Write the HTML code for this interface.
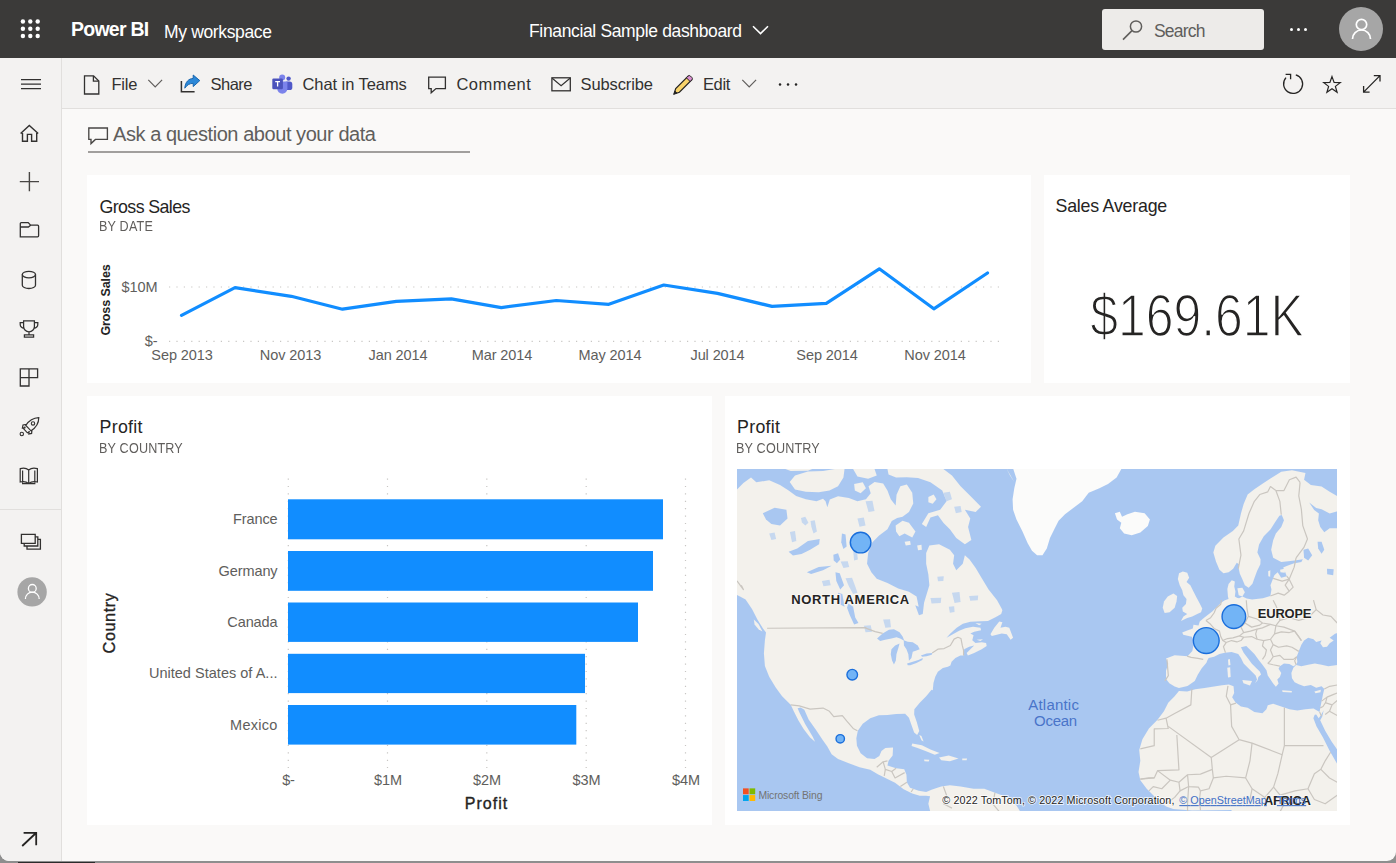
<!DOCTYPE html>
<html lang="en">
<head>
<meta charset="utf-8">
<title>Financial Sample dashboard - Power BI</title>
<style>
*{box-sizing:border-box;margin:0;padding:0}
html,body{width:1396px;height:863px;overflow:hidden;background:#8e8e8e}
body{font-family:"Liberation Sans",sans-serif;color:#252423;position:relative}
#win{position:absolute;left:0;top:0;width:1396px;height:861px;background:#faf9f8;border-radius:0 0 9px 9px;overflow:hidden}
.abs{position:absolute}
#top{left:0;top:0;width:1396px;height:58px;background:#3b3a39;color:#fff}
#tool{left:0;top:58px;width:1396px;height:51px;background:#f3f2f1;border-bottom:1px solid #e1dfdd}
#nav{left:0;top:58px;width:62px;height:805px;background:#f3f2f1;border-right:1px solid #e1dfdd}
.t{position:absolute;white-space:nowrap;line-height:1}
.card{position:absolute;background:#fff}
svg{position:absolute;overflow:visible}
.ttl{font-size:17.8px;color:#252423;letter-spacing:-0.35px}
.sub{font-size:14px;color:#605e5c;letter-spacing:0.2px;transform:scaleX(0.9);transform-origin:0 0}
.ax{font-size:14.5px;color:#605e5c;letter-spacing:-0.1px}
.xl{transform:translateX(-50%)}
.yl{right:1118.5px}
.tb{font-size:16.5px;color:#323130;top:75.5px}
</style>
</head>
<body>
<div id="win">
<div id="top" class="abs"></div>
<div id="tool" class="abs"></div>
<div id="nav" class="abs"></div>

<!-- TOP BAR -->
<svg id="waffle" style="left:20px;top:19px" width="21" height="21" viewBox="0 0 21 21" fill="#fff"><circle cx="2.9" cy="2.5" r="2.2"/><circle cx="10.3" cy="2.5" r="2.2"/><circle cx="17.7" cy="2.5" r="2.2"/><circle cx="2.9" cy="9.8" r="2.2"/><circle cx="10.3" cy="9.8" r="2.2"/><circle cx="17.7" cy="9.8" r="2.2"/><circle cx="2.9" cy="17.0" r="2.2"/><circle cx="10.3" cy="17.0" r="2.2"/><circle cx="17.7" cy="17.0" r="2.2"/></svg>
<div class="t" id="pbi" style="left:71px;top:20px;font-size:19.5px;font-weight:bold;color:#fff;letter-spacing:-0.75px">Power BI</div>
<div class="t" id="myws" style="left:164px;top:24px;font-size:17.5px;color:#fff;letter-spacing:-0.35px">My workspace</div>
<div class="t" id="dash" style="left:529px;top:22.5px;font-size:17.5px;color:#fff;letter-spacing:-0.35px">Financial Sample dashboard</div>
<svg style="left:752px;top:25px" width="17" height="10" viewBox="0 0 17 10"><path d="M1 1.2 L8.5 8.6 L16 1.2" fill="none" stroke="#fff" stroke-width="1.6"/></svg>
<div class="abs" id="search" style="left:1102px;top:9px;width:162px;height:41px;background:#edebe9;border-radius:3px"></div>
<svg style="left:1122px;top:19px" width="22" height="22" viewBox="0 0 22 22"><circle cx="14" cy="7.5" r="5.6" fill="none" stroke="#605e5c" stroke-width="1.5"/><path d="M10 11.6 L1 20.6" stroke="#605e5c" stroke-width="1.6" fill="none"/></svg>
<div class="t" id="srch" style="left:1154px;top:23px;font-size:17.5px;color:#605e5c;letter-spacing:-0.8px">Search</div>
<svg style="left:1289px;top:27px" width="19" height="5" viewBox="0 0 19 5" fill="#fff"><circle cx="2.5" cy="2.5" r="1.5"/><circle cx="9.5" cy="2.5" r="1.5"/><circle cx="16.5" cy="2.5" r="1.5"/></svg>
<svg style="left:1339px;top:7px" width="44" height="44" viewBox="0 0 44 44"><circle cx="22" cy="22" r="22" fill="#a6a6a6"/><circle cx="22.5" cy="17.5" r="5.2" fill="none" stroke="#fff" stroke-width="1.7"/><path d="M13.5 32 A9 9 0 0 1 31.5 32" fill="none" stroke="#fff" stroke-width="1.7"/></svg>


<!-- TOOLBAR ICONS -->
<svg style="left:0;top:0" width="1396" height="110" viewBox="0 0 1396 110" fill="none" stroke="#323130" stroke-width="1.3" stroke-linejoin="miter">
<!-- file -->
<path d="M84.5 75.8 H93.6 L98.8 81 V94 H84.5 Z"/><path d="M93.4 76 V81.2 H98.6"/>
<path d="M148.3 79.8 L155.2 86.8 L162.1 79.8" stroke-width="1.2" stroke="#605e5c"/>
<!-- share -->
<path d="M181.4 81 V91.8 H194.6" stroke-width="1.5"/>
<path d="M199.8 80.6 L193.2 75 V78.4 C188.6 78.6 185.2 82 184.8 88.2 C187 85 189.6 83.4 193.2 83.3 V86.6 Z" fill="#2b88d8" stroke="#0f5ea8" stroke-width="0.9"/>
<!-- teams -->
<g stroke="none">
<circle cx="288.6" cy="78.6" r="2.2" fill="#5059c9"/><rect x="284.5" y="81.6" width="7.8" height="8.4" rx="2.6" fill="#5059c9"/>
<circle cx="282.2" cy="77.6" r="3" fill="#7b83eb"/><path d="M277.2 81.6 H287.4 V88.6 A5.1 5.1 0 0 1 277.2 88.6 Z" fill="#7b83eb"/>
<rect x="272.3" y="78.6" width="10.6" height="10.6" rx="1.2" fill="#4b53bc"/>
</g>
<path d="M275.2 81.6 H280 M277.6 81.6 V86.6" stroke="#fff" stroke-width="1.3"/>
<!-- comment -->
<path d="M428.7 77.2 H445.4 V88.6 H436 L431.2 92.8 V88.6 H428.7 Z" stroke-width="1.3"/>
<!-- mail -->
<rect x="551.9" y="77.8" width="18.4" height="13" stroke-width="1.3"/><path d="M552.2 78.2 L561.1 85.6 L570 78.2" stroke-width="1.2"/>
<!-- pencil -->
<path d="M688.2 76 L691.9 79.7 L679.4 92.2 L674 94 L675.7 88.5 Z" fill="#f8d36a" stroke="#252423" stroke-width="1.2"/>
<path d="M686.4 77.8 L688.2 76 A1.6 1.6 0 0 1 690.4 76 L691.9 77.5 A1.6 1.6 0 0 1 691.9 79.7 L690.1 81.5 Z" fill="#d98fd1" stroke="#252423" stroke-width="1"/>
<path d="M674 94 L674.9 91 L677 93 Z" fill="#252423" stroke="#252423" stroke-width="0.8"/>
<path d="M742.3 79.8 L749.2 86.8 L756.1 79.8" stroke-width="1.2" stroke="#605e5c"/>
<g fill="#252423" stroke="none"><circle cx="780" cy="84.4" r="1.25"/><circle cx="788" cy="84.4" r="1.25"/><circle cx="796" cy="84.4" r="1.25"/></g>
<!-- refresh -->
<path d="M1295.8 74.8 A9.5 9.5 0 1 1 1286 77.6" stroke-width="1.3" stroke="#252423"/>
<path d="M1285.6 74.4 H1290.6 V79.2" stroke-width="1.3" stroke="#252423"/>
<!-- star -->
<path d="M1332.0 76.6 L1334.1 82.4 L1340.3 82.6 L1335.4 86.4 L1337.1 92.3 L1332.0 88.8 L1326.9 92.3 L1328.6 86.4 L1323.7 82.6 L1329.9 82.4 Z" stroke-width="1.2" stroke="#252423"/>
<!-- expand -->
<path d="M1363.6 92.1 L1380 75.6 M1373.8 75.6 H1380 V81.6 M1363.6 86 V92.1 H1369.6" stroke-width="1.3" stroke="#252423"/>
</svg>

<!-- TOOLBAR TEXT -->
<div class="t tb" style="left:111.5px;letter-spacing:-0.25px">File</div>
<div class="t tb" style="left:210.5px;letter-spacing:-0.5px">Share</div>
<div class="t tb" style="left:302.5px;letter-spacing:-0.07px">Chat in Teams</div>
<div class="t tb" style="left:456.5px;letter-spacing:0.45px">Comment</div>
<div class="t tb" style="left:580.5px;letter-spacing:-0.12px">Subscribe</div>
<div class="t tb" style="left:703px;letter-spacing:-0.4px">Edit</div>


<!-- NAV ICONS -->
<svg style="left:0;top:58px" width="62" height="805" viewBox="0 58 62 805" fill="none" stroke="#323130" stroke-width="1.3">
<path d="M21 79.7 H41 M21 84.2 H41 M21 88.7 H41" stroke-width="1.3"/>
<!-- home -->
<path d="M20.6 133.4 L29.3 125.4 L38.2 133.4 M22.5 131.8 V141.2 H27.4 V134.4 H31.6 V141.2 H36.7 V131.8" stroke-width="1.4"/>
<!-- plus -->
<path d="M29.4 172 V191.2 M19.8 181.6 H39" stroke-width="1.4" stroke="#484644"/>
<!-- folder -->
<path d="M20.3 236.8 V223.6 Q20.3 222.6 21.3 222.6 H28.2 L30.6 225.2 H37.6 Q38.6 225.2 38.6 226.2 V235.8 Q38.6 236.8 37.6 236.8 Z M20.3 227 H28.4 L30.6 225.2" stroke-width="1.3"/>
<!-- cylinder -->
<ellipse cx="28.9" cy="274.6" rx="6.6" ry="3.3"/><path d="M22.3 274.6 V285.2 A6.6 3.3 0 0 0 35.5 285.2 V274.6"/>
<!-- trophy -->
<path d="M23.6 320.8 H34.4 V326.4 A5.4 5.4 0 0 1 23.6 326.4 Z M23.6 322.6 H20.2 V324.4 A3.6 3.6 0 0 0 23.9 328 M34.4 322.6 H37.8 V324.4 A3.6 3.6 0 0 1 34.1 328 M29 331.8 V334.6 M24.4 337.2 V334.8 H33.6 V337.2 Z" stroke-width="1.25"/>
<!-- apps -->
<path d="M20.3 368.9 H37.6 V377.6 H29 V386 H20.3 Z M20.3 377.6 H29 V368.9" stroke-width="1.3"/>
<!-- rocket -->
<path d="M38.8 417.6 C33.6 417.8 29 420.4 25.8 425.4 L31 430.8 C36 427.8 38.8 423 38.8 417.6 Z M26.6 424.4 L23 425 L22.4 428 L25.6 427.6 M32 429.8 L31.6 433.4 L28.8 434 L29 431 M25.2 426.6 L23.8 429 L27.4 432.8 L29.8 431.4" stroke-width="1.2"/>
<circle cx="33" cy="423.4" r="1.7" stroke-width="1.1"/><circle cx="21.8" cy="434" r="1.7" stroke-width="1.1"/>
<!-- book -->
<path d="M28.7 470 C26.4 468 23 467.8 20.2 468.6 V482 C23 481.2 26.4 481.6 28.7 483.4 C31 481.6 34.4 481.2 37.4 482 V468.6 C34.4 467.8 31 468 28.7 470 Z M28.7 470 V483.4 M22.6 470.4 V483.6 H34.8 V470.4" stroke-width="1.2"/>
<!-- divider -->
<path d="M0 509.5 H61" stroke="#e1dfdd" stroke-width="1"/>
<!-- workspaces -->
<path d="M21.4 534.4 H35.2 V543.4 H21.4 Z M35.2 536.8 H37.8 V546 H24.2 V543.4 M37.8 539.4 H40.4 V549.2 H27 V546" stroke-width="1.3"/>
<!-- avatar -->
<circle cx="32.1" cy="591.9" r="14.7" fill="#a6a6a6" stroke="none"/>
<circle cx="32.3" cy="588.4" r="3.9" stroke="#fff" stroke-width="1.3"/><path d="M25.4 599 A6.9 6.9 0 0 1 39.2 599" stroke="#fff" stroke-width="1.3"/>
<!-- arrow -->
<path d="M22.2 846 L36 833 M23.6 832.8 H36.2 V845.2" stroke="#252423" stroke-width="1.8"/>
</svg>
<svg style="left:88px;top:126px" width="21" height="19" viewBox="0 0 21 19" fill="none" stroke="#484644" stroke-width="1.35"><path d="M0.8 2 H19.4 V13.4 H7.4 L3 17.6 V13.4 H0.8 Z"/></svg>

<!-- Q&A -->
<div class="t" id="qa" style="left:113px;top:123.5px;font-size:20px;color:#605e5c;letter-spacing:-0.44px">Ask a question about your data</div>
<div class="abs" style="left:88px;top:151px;width:382px;height:1.5px;background:#a19f9d"></div>

<!-- CARDS -->
<div class="card" id="c1" style="left:87px;top:175px;width:943.8px;height:208.2px"></div>
<div class="card" id="c2" style="left:1043.8px;top:175px;width:306.2px;height:208.2px"></div>
<div class="card" id="c3" style="left:87px;top:396px;width:625px;height:429px"></div>
<div class="card" id="c4" style="left:725px;top:396px;width:625px;height:429px"></div>


<!--MAP-START-->
<svg id="map" style="left:736.8px;top:468.7px;overflow:hidden" width="600.2" height="342.5" viewBox="0 0 600 342" preserveAspectRatio="none">
<defs><filter id="mb" x="-5%" y="-5%" width="110%" height="110%"><feGaussianBlur stdDeviation="0.7"/></filter></defs>
<rect x="0" y="0" width="600" height="342" fill="#a9c7f1"/>
<g filter="url(#mb)">
<g fill="#f3f1ec"><path d="M0.0 20.4 L6.4 14.0 L14.0 8.6 L19.3 13.3 L32.2 11.2 L43.0 16.1 L51.6 21.5 L59.1 26.9 L68.8 30.1 L79.5 32.2 L86.0 29.7 L88.5 32.2 L90.3 38.3 L92.8 30.5 L101.0 27.1 L111.8 29.0 L120.4 32.2 L128.9 30.1 L133.7 24.1 L131.5 17.2 L137.5 12.9 L146.1 14.6 L150.4 21.5 L153.7 30.1 L158.6 36.5 L159.5 25.8 L163.3 17.2 L169.8 15.5 L175.2 23.6 L176.2 34.4 L171.9 43.0 L165.5 47.7 L160.1 49.0 L154.7 52.0 L150.4 60.2 L141.8 66.6 L135.4 73.1 L131.1 83.8 L130.0 94.6 L134.3 103.2 L139.7 109.6 L150.4 113.9 L161.2 119.3 L171.9 122.5 L179.5 127.2 L181.6 137.5 L178.2 136.0 L181.9 146.1 L185.7 144.8 L187.0 133.5 L192.3 116.1 L191.3 105.3 L189.1 94.6 L189.1 83.8 L192.3 76.3 L202.0 75.2 L212.8 80.6 L217.1 86.0 L216.0 94.6 L219.2 101.0 L225.7 94.6 L227.8 86.0 L232.5 90.3 L238.6 98.9 L245.0 109.6 L251.5 120.4 L260.0 131.1 L264.8 139.7 L265.3 141.1 L264.1 144.8 L258.4 148.0 L250.9 151.7 L243.4 152.1 L233.3 152.6 L225.8 154.6 L219.6 158.6 L213.3 164.2 L209.5 168.4 L215.8 165.1 L222.1 161.4 L228.3 158.9 L235.9 157.4 L243.4 158.6 L244.0 161.1 L237.1 162.4 L233.3 164.2 L236.5 166.1 L235.2 171.1 L238.4 173.7 L244.6 173.0 L249.0 173.7 L249.6 176.8 L244.6 179.9 L237.1 183.7 L230.8 186.2 L229.6 183.7 L233.3 179.9 L237.1 176.2 L232.1 177.4 L227.1 179.9 L226.5 186.2 L223.3 186.2 L218.3 188.7 L214.5 192.5 L213.3 196.2 L210.8 197.5 L205.8 198.7 L200.8 202.5 L198.2 207.5 L196.4 213.8 L195.7 221.0 L194.5 220.4 L189.1 226.9 L182.7 233.3 L177.3 239.8 L177.1 245.1 L179.7 252.7 L182.2 261.7 L180.1 265.6 L177.1 263.0 L174.5 255.9 L171.9 248.4 L168.1 244.5 L159.0 244.7 L150.4 245.6 L141.8 245.8 L133.2 248.8 L125.7 254.4 L120.8 261.3 L119.3 268.8 L119.9 276.3 L123.6 283.8 L130.0 288.8 L137.5 289.6 L142.3 286.6 L144.4 281.5 L148.3 278.5 L156.0 278.0 L155.6 286.0 L151.5 291.4 L150.4 296.1 L159.0 298.9 L167.2 299.9 L169.4 305.3 L169.8 312.8 L173.0 318.2 L181.6 321.4 L189.1 322.5 L194.5 320.4 L198.8 318.9 L204.2 317.1 L212.8 315.9 L223.5 317.1 L236.4 319.3 L247.2 319.3 L257.9 323.2 L269.7 327.5 L279.4 336.1 L283.7 342.9 L193.4 342.9 L191.3 334.3 L193.0 326.8 L189.1 326.2 L182.7 326.2 L175.2 324.0 L166.6 319.7 L158.0 313.3 L149.4 309.0 L140.8 304.7 L133.2 300.4 L122.5 297.8 L111.8 293.9 L101.0 289.6 L94.6 284.9 L90.3 277.2 L85.5 270.3 L78.7 260.2 L71.6 250.1 L67.3 240.4 L63.6 238.1 L60.6 238.9 L62.3 243.0 L68.1 254.6 L75.7 267.3 L78.0 272.4 L73.1 268.1 L66.6 259.5 L61.3 250.9 L57.0 242.4 L53.7 235.5 L45.1 226.9 L38.7 218.3 L32.2 207.5 L27.9 196.8 L26.9 183.9 L27.9 171.0 L29.0 163.3 L25.8 159.0 L20.4 150.4 L15.0 139.7 L8.6 130.2 L3.0 127.2 L0.0 125.9 Z"/><path d="M52.7 12.9 L58.0 6.4 L70.9 2.6 L86.0 2.1 L97.8 0.0 L107.5 0.0 L106.4 8.6 L101.0 17.2 L92.4 21.5 L81.7 23.2 L68.8 22.6 L58.0 20.4 Z"/><path d="M48.4 0.0 L75.2 0.0 L70.9 1.7 L53.7 2.1 Z"/><path d="M117.1 15.0 L125.7 13.3 L128.9 19.3 L123.6 24.1 L117.8 21.5 Z"/><path d="M116.1 0.0 L137.5 0.0 L139.7 6.4 L131.1 9.7 L120.4 7.5 Z"/><path d="M150.4 0.0 L206.3 0.0 L214.9 6.4 L223.5 17.2 L234.3 27.9 L243.9 37.6 L238.6 43.0 L227.8 40.8 L233.2 49.4 L231.0 58.0 L234.3 70.9 L227.8 75.2 L219.2 68.8 L212.8 60.2 L206.3 53.7 L200.9 46.2 L193.4 48.4 L189.1 58.0 L184.8 54.8 L191.3 44.1 L203.1 40.8 L209.5 32.2 L205.2 21.5 L193.4 13.3 L181.0 9.0 L169.8 8.2 L159.0 8.6 L151.5 5.4 Z"/><path d="M191.3 27.9 L196.6 25.4 L199.4 30.1 L195.6 34.8 L191.3 33.3 Z"/><path d="M158.6 56.3 L165.5 51.6 L171.9 53.7 L178.4 62.3 L175.2 68.3 L167.6 64.5 L162.3 67.1 L159.0 62.3 Z"/><path d="M167.6 72.6 L173.0 72.0 L173.7 75.7 L168.7 76.3 Z"/><path d="M180.1 76.3 L184.4 75.7 L184.8 80.6 L181.0 81.2 Z"/><path d="M269.7 0.0 L277.2 12.9 L272.9 6.4 Z"/><path d="M253.4 164.9 L257.2 158.6 L262.2 152.3 L265.3 153.0 L263.4 158.6 L268.4 157.4 L272.2 158.6 L276.0 168.6 L273.5 170.5 L269.7 164.9 L264.7 164.2 L259.7 165.5 L254.7 166.8 Z"/><path d="M238.4 153.8 L244.6 154.6 L242.1 156.1 Z"/><path d="M239.6 170.5 L245.9 170.1 L243.4 171.8 Z"/><path d="M16.8 150.4 L21.5 154.7 L25.4 162.3 L21.5 160.1 L17.6 155.2 Z"/><path d="M175.2 274.2 L184.8 275.9 L193.4 280.2 L202.5 283.6 L197.7 285.3 L189.1 281.9 L180.5 278.5 L174.5 276.7 Z"/><path d="M202.0 288.1 L211.7 286.0 L221.4 289.2 L212.8 291.8 L204.2 290.9 Z"/><path d="M225.2 289.2 L230.0 289.2 L229.5 290.9 L225.2 290.9 Z"/><path d="M187.0 290.1 L192.3 290.3 L191.7 292.0 L187.4 291.8 Z"/><path d="M182.2 265.6 L184.4 266.6 L186.5 272.0 L184.4 270.9 Z"/><path d="M568.3 4.0 L554.8 1.3 L544.1 2.7 L533.3 9.4 L525.3 14.8 L517.2 20.2 L510.5 25.5 L506.5 34.9 L503.8 44.4 L501.1 56.5 L495.7 61.8 L486.3 68.5 L478.2 76.6 L476.2 83.3 L478.9 92.7 L482.3 100.5 L486.3 104.2 L491.5 103.0 L496.0 99.5 L499.6 93.5 L501.8 95.0 L501.5 99.0 L502.7 104.5 L505.2 110.2 L507.7 116.1 L511.5 118.6 L515.3 114.6 L517.6 108.0 L520.0 101.5 L523.2 95.0 L523.4 90.0 L520.2 83.3 L521.9 75.3 L526.6 67.2 L533.3 60.5 L537.4 53.8 L542.2 46.6 L544.6 45.9 L546.8 51.1 L544.1 57.8 L538.7 64.5 L536.0 71.2 L534.0 80.6 L536.0 88.7 L544.1 92.9 L551.0 92.2 L557.5 91.4 L565.6 90.1 L564.2 92.9 L556.2 94.3 L549.5 96.8 L546.0 98.3 L547.3 101.2 L549.6 107.0 L544.0 108.6 L540.5 103.2 L537.2 106.0 L536.0 109.2 L533.3 116.0 L534.3 120.4 L533.2 126.8 L525.7 129.0 L514.9 130.4 L509.5 129.2 L505.2 127.4 L502.0 129.0 L500.2 128.8 L497.7 127.4 L498.3 122.3 L497.1 117.3 L497.7 112.3 L494.6 111.1 L491.4 114.8 L490.2 119.8 L490.8 127.4 L491.4 129.9 L487.7 131.1 L483.9 133.6 L480.2 137.4 L475.1 142.4 L467.6 148.0 L462.6 152.4 L461.4 156.2 L456.3 155.6 L455.7 159.3 L450.1 161.2 L445.1 163.2 L446.1 165.4 L454.7 167.6 L456.9 173.1 L455.2 181.7 L450.4 187.1 L437.5 186.0 L428.9 189.3 L431.1 194.6 L428.9 201.1 L428.9 209.7 L432.2 214.0 L437.5 217.2 L441.8 218.7 L450.4 216.6 L457.6 211.8 L460.6 205.4 L464.6 198.9 L469.3 193.4 L470.0 191.4 L471.5 188.8 L476.9 187.5 L482.3 184.8 L487.6 183.4 L494.4 182.7 L501.1 184.8 L503.8 188.8 L506.5 194.2 L510.5 198.2 L514.5 202.2 L518.5 206.3 L519.9 210.3 L517.9 213.9 L520.4 211.0 L521.2 207.6 L523.9 205.2 L522.6 202.2 L518.5 198.2 L514.5 194.2 L510.5 188.8 L506.5 183.4 L503.8 178.0 L509.1 176.7 L513.2 180.7 L517.2 184.8 L521.2 190.1 L525.3 195.5 L529.3 200.9 L530.6 206.3 L533.3 210.3 L536.0 214.3 L538.7 217.5 L541.4 214.3 L540.1 210.3 L542.7 207.6 L544.1 203.6 L541.4 199.5 L542.7 196.9 L546.8 194.2 L552.2 194.8 L556.2 196.9 L558.9 195.5 L560.2 192.8 L559.5 187.5 L561.6 182.1 L564.2 175.4 L566.9 171.3 L571.0 168.6 L576.3 170.0 L579.0 172.7 L584.4 171.3 L583.1 174.0 L585.8 178.0 L589.8 177.4 L592.5 174.0 L596.5 171.3 L592.5 168.6 L597.8 164.6 L602.0 163.3 L602.0 28.2 L592.5 22.8 L584.4 17.5 L573.7 16.1 L566.9 10.8 Z"/><path d="M558.9 195.7 L564.2 196.9 L571.0 195.5 L577.7 194.2 L584.4 195.5 L591.1 196.9 L602.0 195.5 L602.0 343.0 L496.0 343.0 L494.0 340.6 L455.0 341.0 L436.0 339.6 L429.0 337.0 L422.5 332.2 L416.1 325.7 L409.6 319.3 L403.2 310.7 L401.4 302.5 L403.2 291.4 L402.1 280.6 L405.3 269.9 L411.8 259.1 L420.4 250.5 L426.8 241.9 L431.1 233.3 L437.5 226.9 L441.8 221.7 L450.0 222.2 L458.1 219.9 L467.5 218.6 L476.9 217.2 L484.9 215.9 L491.7 215.2 L496.4 217.0 L497.0 223.7 L495.0 227.8 L498.4 233.1 L503.8 237.2 L510.5 238.5 L517.2 242.6 L525.3 243.9 L529.3 239.9 L530.6 235.8 L536.0 234.5 L544.1 237.2 L552.2 239.9 L560.2 241.2 L568.3 239.9 L576.3 239.2 L582.4 242.6 L583.1 238.5 L584.4 231.8 L585.8 225.1 L587.1 219.7 L584.4 217.0 L579.0 218.4 L573.7 215.7 L566.9 217.0 L561.6 215.0 L557.5 213.0 L554.8 209.0 L554.2 203.6 L556.2 198.4 Z"/><path d="M445.7 102.3 L450.1 103.5 L452.0 108.6 L449.4 112.9 L453.2 116.1 L456.3 122.3 L459.5 128.6 L462.6 134.2 L465.1 139.3 L463.9 143.0 L460.1 144.9 L455.1 147.4 L450.1 148.7 L443.8 151.8 L446.3 147.4 L450.1 144.9 L445.7 142.4 L445.1 138.6 L448.8 134.9 L449.4 129.9 L446.3 126.1 L445.1 121.1 L442.6 116.1 L440.7 109.8 L441.9 104.2 Z"/><path d="M426.9 132.4 L430.6 127.4 L436.3 124.2 L440.0 126.7 L439.4 132.4 L437.5 138.6 L432.5 143.0 L427.5 143.7 L425.6 138.6 Z"/><path d="M500.2 119.2 L505.2 118.6 L507.7 123.0 L505.2 127.4 L501.5 126.1 Z"/><path d="M505.2 210.8 L514.9 211.8 L512.8 216.1 L506.3 214.0 Z"/><path d="M490.1 198.5 L493.0 197.9 L493.5 207.6 L490.9 208.2 Z"/><path d="M490.9 190.1 L492.7 189.6 L493.3 195.8 L491.3 196.1 Z"/><path d="M545.0 220.9 L554.7 221.7 L554.5 223.2 L545.4 222.6 Z"/><path d="M577.2 222.1 L583.7 220.4 L583.3 223.0 L578.3 223.9 Z"/><path d="M531.0 102.1 L533.2 101.0 L533.0 107.5 L531.2 107.0 Z"/><path d="M542.9 100.6 L548.2 99.3 L547.6 103.6 L543.3 103.2 Z"/></g>
<g fill="#fbfbfa"><path d="M276.2 0.0 L279.4 9.7 L277.2 19.3 L275.5 30.1 L276.0 40.8 L279.4 50.5 L285.4 62.3 L290.6 74.1 L294.9 81.7 L300.0 86.0 L305.4 86.0 L309.7 79.5 L312.9 68.8 L317.2 60.2 L321.5 51.6 L327.9 45.1 L336.5 38.7 L345.1 32.2 L351.6 23.6 L362.3 19.3 L370.9 15.0 L379.5 8.6 L384.2 0.0 Z"/><path d="M377.8 44.1 L382.7 42.6 L384.9 47.7 L390.3 45.1 L397.8 42.6 L407.5 44.1 L412.8 50.5 L410.7 57.0 L403.2 63.4 L394.6 66.2 L387.0 64.5 L382.7 59.1 L384.2 53.7 L379.9 50.5 Z"/></g>
<g fill="#a9c7f1"><path d="M25.8 44.1 L37.6 38.7 L49.4 40.8 L50.5 49.4 L43.0 56.3 L34.4 54.8 L29.0 50.5 Z"/><path d="M51.6 82.7 L60.2 79.5 L70.9 72.0 L82.7 69.8 L82.1 75.2 L73.1 80.6 L64.5 84.9 L55.9 86.4 Z"/><path d="M69.8 103.2 L81.7 97.8 L94.6 96.7 L86.0 101.0 L74.1 104.9 Z"/><path d="M96.3 85.5 L101.0 84.2 L103.2 90.3 L99.9 94.1 L96.7 91.3 Z"/><path d="M111.3 134.3 L116.1 137.5 L118.2 148.3 L121.4 153.7 L117.1 155.2 L112.8 146.1 L110.0 138.6 Z"/><path d="M104.9 64.5 L108.5 65.5 L109.6 77.4 L106.4 79.9 L104.2 73.1 Z"/><path d="M98.4 103.2 L102.7 104.2 L107.0 116.1 L103.2 120.4 L99.3 111.8 Z"/><path d="M101.0 123.6 L105.3 124.7 L107.5 137.5 L103.2 135.4 Z"/><path d="M140.0 169.3 L145.6 164.2 L151.9 160.5 L156.9 159.9 L162.5 163.0 L165.7 167.4 L167.2 171.4 L163.1 169.3 L159.4 168.0 L154.4 169.3 L148.1 170.5 L143.1 171.8 Z"/><path d="M154.4 179.9 L158.1 176.2 L162.5 174.3 L161.3 178.7 L159.4 184.9 L158.8 191.2 L156.9 195.2 L155.0 191.2 L153.7 184.9 Z"/><path d="M166.7 170.9 L170.7 172.4 L175.7 173.0 L180.7 176.2 L182.6 179.9 L179.4 181.2 L175.7 182.4 L174.4 188.7 L171.9 191.5 L171.3 184.9 L169.4 179.9 L166.9 176.2 Z"/><path d="M170.0 194.3 L175.7 192.5 L181.3 190.6 L185.7 188.7 L185.3 190.7 L179.4 193.7 L173.2 196.0 L170.7 196.0 Z"/><path d="M183.8 186.2 L189.5 184.3 L195.1 183.7 L194.7 185.6 L189.5 186.9 L185.1 187.4 Z"/><path d="M566.3 80.6 L571.0 79.3 L575.0 86.0 L571.0 91.4 L566.9 88.7 Z"/><path d="M580.4 72.6 L584.4 72.6 L587.1 80.6 L584.4 84.7 L581.0 79.3 Z"/><path d="M572.0 33.5 L579.0 39.0 L584.4 40.3 L592.5 44.4 L602.0 41.7 L602.0 59.1 L592.5 59.1 L587.1 63.2 L583.1 57.8 L581.0 51.1 L581.7 44.4 L577.0 41.0 Z"/><path d="M576.2 248.8 L579.4 257.0 L585.8 268.1 L592.3 281.0 L602.0 298.0 L602.0 283.0 L594.4 272.0 L588.0 261.3 L583.0 251.0 L585.0 247.5 L586.5 241.0 L584.0 245.5 L581.5 249.0 L579.0 245.1 L577.5 245.5 Z"/><path d="M589.8 99.5 L596.5 100.0 L596.0 106.2 L590.0 105.0 Z"/></g>
<g fill="#a9c7f1" fill-opacity="0.6" filter="url(#mb)"><path d="M64.0 49.0 L68.3 47.7 L71.4 53.7 L68.3 56.3 L64.9 53.3 Z"/><path d="M73.5 52.0 L77.8 51.1 L79.9 62.3 L76.5 64.5 L74.4 58.0 Z"/><path d="M52.9 62.8 L58.0 61.9 L59.3 72.0 L55.0 73.1 Z"/><path d="M103.6 92.4 L110.7 92.0 L112.2 97.8 L106.4 98.9 Z"/><path d="M108.5 109.2 L115.0 108.5 L117.8 116.1 L120.4 123.6 L116.1 124.7 L111.8 117.1 Z"/><path d="M128.5 32.2 L135.4 31.8 L137.5 41.9 L131.5 43.0 Z"/><path d="M120.4 49.4 L126.8 48.4 L128.5 56.3 L122.5 57.6 Z"/><path d="M116.1 81.7 L119.9 81.2 L120.8 90.3 L117.1 91.3 Z"/><path d="M214.9 123.6 L222.4 122.9 L223.5 132.8 L217.5 133.7 Z"/><path d="M232.1 126.8 L241.1 126.4 L240.7 131.1 L233.2 131.5 Z"/><path d="M193.4 128.9 L204.2 128.5 L203.7 133.7 L194.5 134.3 Z"/><path d="M200.3 107.5 L206.7 107.0 L206.3 111.8 L200.9 112.2 Z"/><path d="M211.7 137.5 L217.1 137.1 L217.5 142.9 L212.8 143.6 Z"/><path d="M146.1 150.4 L153.0 150.0 L153.9 158.0 L148.3 158.6 Z"/><path d="M126.8 156.5 L133.7 156.0 L135.0 162.5 L128.5 162.9 Z"/><path d="M206.3 23.6 L212.8 22.6 L214.9 30.1 L209.5 32.2 Z"/><path d="M217.1 37.6 L223.5 37.0 L224.6 43.0 L218.8 44.1 Z"/><path d="M32.2 64.5 L37.6 63.4 L39.1 69.8 L34.4 70.9 Z"/><path d="M84.9 111.8 L92.4 110.7 L93.7 116.1 L86.4 117.1 Z"/></g>
<g fill="none" stroke="#cac6c0" stroke-width="1.2" stroke-linejoin="round"><path d="M30.1 159.0 L128.9 158.4 L128.0 158.6 L138.1 162.4 L145.6 164.2"/><path d="M195.1 183.7 L200.8 179.9 L207.0 179.3 L213.3 176.2 L217.0 169.9 L220.8 168.0 L223.9 169.3 L225.2 176.2 L226.5 181.2 L226.5 186.2"/><path d="M0.0 111.8 L6.4 120.4 L4.3 116.1"/><path d="M53.7 235.5 L62.3 236.5 L73.1 239.8 L86.0 238.7 L92.4 241.9 L96.7 247.3 L105.3 246.2 L109.6 251.6 L116.1 259.1 L120.4 261.3"/><path d="M139.7 297.8 L146.1 292.4 L150.4 291.4"/><path d="M146.1 292.4 L148.3 299.9 L154.7 302.1 L159.0 298.9"/><path d="M148.3 299.9 L147.2 306.4"/><path d="M154.7 302.1 L158.0 308.5 L167.6 303.2"/><path d="M163.3 317.1 L169.8 312.8"/><path d="M174.1 322.5 L176.2 319.3"/><path d="M206.3 317.1 L209.5 325.7 L206.3 334.3 L214.9 338.6"/><path d="M257.9 323.2 L255.7 334.3 L262.2 342.1"/><path d="M501.1 99.5 L503.8 86.0 L501.7 69.9 L506.5 61.8 L511.8 44.4 L517.2 32.3 L522.6 25.5 L530.6 22.8 L533.3 17.5 L538.7 21.5"/><path d="M538.7 21.5 L542.7 32.3 L544.1 45.7"/><path d="M538.7 21.5 L546.8 21.5 L552.2 10.8 L558.9 8.1 L562.9 13.4"/><path d="M562.9 13.4 L561.6 26.9 L564.2 40.3 L565.6 56.5 L570.3 69.9 L566.9 78.0 L558.9 88.7"/><path d="M466.1 190.1 L460.8 189.1 L454.0 188.1 L450.0 186.8"/><path d="M429.8 190.1 L431.2 206.3 L427.8 211.6"/><path d="M488.3 183.4 L486.3 177.4 L489.0 173.3 L485.6 171.3 L483.6 167.3 L482.3 161.9 L476.9 159.2 L472.8 154.5 L468.8 151.2"/><path d="M468.8 151.2 L473.5 148.5 L476.9 143.8 L478.9 139.1 L483.6 135.0 L484.3 131.0"/><path d="M489.0 173.3 L494.4 171.3 L499.7 172.7 L503.8 171.3 L506.5 168.0 L514.5 167.3 L519.9 170.0"/><path d="M485.6 171.3 L490.3 169.3 L495.7 168.6 L502.4 166.6 L506.5 168.0"/><path d="M509.1 131.0 L509.8 139.1 L511.2 147.1 L507.8 153.8 L503.8 157.9 L506.5 163.3 L502.4 166.6"/><path d="M511.2 147.1 L519.9 149.8 L525.3 153.8 L533.3 155.2 L538.7 156.5 L542.7 151.2 L541.4 143.1 L538.7 136.4 L536.0 131.0"/><path d="M507.8 153.8 L514.5 157.9 L522.6 155.9 L525.3 153.8"/><path d="M506.5 163.3 L513.2 161.9 L519.9 159.9 L525.3 158.6 L533.3 155.2"/><path d="M519.9 170.0 L518.5 164.6 L519.9 159.9"/><path d="M519.9 170.0 L526.6 171.3 L533.3 170.0 L537.4 164.6 L538.7 156.5"/><path d="M537.4 164.6 L544.1 162.6 L552.2 163.3 L557.5 161.9 L564.2 171.3"/><path d="M533.3 170.0 L536.0 175.4 L541.4 178.0 L549.5 176.7 L554.8 178.0 L561.6 182.1"/><path d="M526.6 171.3 L525.3 176.7 L529.3 180.7 L528.0 186.1 L525.3 190.1"/><path d="M536.0 175.4 L533.3 180.7 L536.0 187.5 L533.3 191.5 L530.6 194.2"/><path d="M536.0 187.5 L542.7 186.1 L546.8 190.1 L556.2 190.1 L559.5 187.5"/><path d="M530.6 194.2 L536.0 195.5 L542.7 196.9"/><path d="M538.7 156.5 L546.8 157.9 L557.5 161.9"/><path d="M542.7 151.2 L552.2 148.5 L561.6 151.2 L571.0 148.5 L579.0 140.4 L576.3 131.0"/><path d="M579.0 140.4 L585.8 145.8 L593.8 147.1 L600.0 153.8"/><path d="M557.5 161.9 L561.6 167.3 L564.2 171.3"/><path d="M533.2 126.8 L541.0 124.0 L547.0 126.0 L552.0 122.0 L548.0 116.0 L552.0 110.0 L549.6 107.0"/><path d="M536.0 109.2 L545.0 112.0 L552.0 110.0"/><path d="M558.9 88.7 L557.0 98.0 L552.0 110.0 L556.0 118.0 L552.0 122.0"/><path d="M558.9 195.5 L557.5 191.5 L559.5 187.5"/><path d="M587.1 219.7 L592.5 217.0 L600.0 215.7"/><path d="M584.4 231.8 L589.8 227.8 L596.5 225.1 L600.0 223.7"/><path d="M583.1 238.5 L585.8 237.2 L588.4 233.2 L589.8 227.8"/><path d="M582.4 242.6 L584.4 247.0"/><path d="M454.7 219.4 L453.7 235.5 L437.5 244.1 L428.9 248.8 L420.4 250.9"/><path d="M428.9 248.8 L431.1 259.1 L417.1 259.5 L417.1 276.3 L403.2 279.5"/><path d="M431.1 257.0 L474.1 288.1 L502.0 270.3"/><path d="M502.0 270.3 L494.5 257.0 L493.4 235.5 L489.1 226.9 L490.8 216.6"/><path d="M493.4 235.5 L498.8 233.8"/><path d="M502.0 270.3 L514.9 273.7 L545.0 285.3 L547.2 276.3 L547.2 238.1"/><path d="M547.2 276.3 L586.3 276.3"/><path d="M439.7 265.6 L441.8 300.4 L420.4 301.2 L417.1 308.5 L403.2 309.6"/><path d="M474.1 288.1 L475.2 299.9 L463.3 304.7 L450.4 305.3 L441.8 312.8 L433.2 310.7 L420.4 301.2"/><path d="M514.9 273.7 L512.8 291.4 L508.5 308.5 L514.9 319.3 L512.8 330.0"/><path d="M545.0 285.3 L540.7 304.2 L536.4 317.6 L542.9 325.7 L557.9 321.4 L570.8 319.3 L577.2 304.2 L583.7 299.9 L588.0 291.4 L593.4 282.8"/><path d="M475.2 299.9 L476.2 308.5 L489.1 306.8 L508.5 308.5"/><path d="M476.2 308.5 L471.9 319.3 L463.3 321.4 L462.3 330.0 L463.3 340.8"/><path d="M450.4 305.3 L451.5 317.1 L461.2 317.6 L463.3 321.4"/><path d="M441.8 312.8 L442.9 321.4 L451.5 317.1"/><path d="M451.5 317.1 L450.4 334.3 L450.4 342.1"/><path d="M442.9 321.4 L437.5 327.9 L428.9 334.3"/><path d="M433.2 310.7 L424.7 319.3 L416.1 317.1 L411.8 321.4"/><path d="M403.2 309.6 L411.8 308.5 L417.1 308.5"/><path d="M536.4 317.6 L527.8 327.9 L514.9 319.3"/><path d="M542.9 325.7 L547.2 334.3 L542.9 342.1"/><path d="M570.8 319.3 L577.2 330.0 L588.0 334.3 L600.0 325.7"/><path d="M583.7 299.9 L592.3 308.5 L600.0 312.8"/><path d="M588.0 233.3 L594.9 235.5 L592.3 241.9 L588.0 245.1"/><path d="M594.9 235.5 L600.0 231.2"/><path d="M592.3 241.9 L600.0 246.2"/></g>
</g>
<g fill="#5aa9f8" fill-opacity="0.85" stroke="#1a6edb" stroke-width="1.4"><circle cx="123.6" cy="73.5" r="10.3"/><circle cx="115.2" cy="205.4" r="5.3"/><circle cx="103.2" cy="269.4" r="4.2"/><circle cx="496.7" cy="147.4" r="11.8"/><circle cx="469.1" cy="171.3" r="12.9"/></g>
<g font-family="Liberation Sans, sans-serif" font-weight="bold" font-size="13" fill="#252423" stroke="#f7f6f3" stroke-width="2.2" paint-order="stroke" stroke-linejoin="round"><text x="54.2" y="135" textLength="118" lengthAdjust="spacing">NORTH AMERICA</text><text x="520.7" y="149.2" textLength="53.6" lengthAdjust="spacing">EUROPE</text><text x="526.8" y="335.6" textLength="46.8" lengthAdjust="spacing">AFRICA</text></g>
<g font-family="Liberation Sans, sans-serif" font-size="15" fill="#4a74c9" text-anchor="middle"><text x="316.5" y="240.4" textLength="50.6" lengthAdjust="spacing">Atlantic</text><text x="318.5" y="256.6" textLength="43" lengthAdjust="spacing">Ocean</text></g>
<g><rect x="6" y="318.9" width="5.7" height="5.9" fill="#f25022"/><rect x="12.5" y="318.9" width="5.7" height="5.9" fill="#7fba00"/><rect x="6" y="325.6" width="5.7" height="5.9" fill="#00a4ef"/><rect x="12.5" y="325.6" width="5.7" height="5.9" fill="#ffb900"/><text x="21.4" y="329.3" font-family="Liberation Sans, sans-serif" font-size="10.4" fill="#737373" textLength="64" lengthAdjust="spacing">Microsoft Bing</text></g>
<g font-family="Liberation Sans, sans-serif" font-size="10.8" fill="#252423" stroke="#ffffff" stroke-opacity="0.75" stroke-width="1.8" paint-order="stroke" stroke-linejoin="round"><text x="205.3" y="334.6" textLength="232" lengthAdjust="spacing">© 2022 TomTom, © 2022 Microsoft Corporation,</text></g><g font-family="Liberation Sans, sans-serif" font-size="10.8" fill="#3f6fc6" text-decoration="underline"><text x="442.2" y="334.6" textLength="87.4" lengthAdjust="spacing">© OpenStreetMap</text><text x="539.7" y="334.6" textLength="29.3" lengthAdjust="spacing">Terms</text></g>
</svg>
<!--MAP-END-->
<!-- CARD TEXT -->
<div class="t ttl" id="t1" style="left:99.5px;top:198.5px;letter-spacing:-0.6px">Gross Sales</div>
<div class="t sub" id="s1" style="left:98.5px;top:219.3px">BY DATE</div>
<div class="t ttl" id="t2" style="left:1055.5px;top:198px;letter-spacing:-0.22px">Sales Average</div>
<div class="t ttl" id="t3" style="left:99.5px;top:419px;letter-spacing:0.3px">Profit</div>
<div class="t sub" id="s3" style="left:98.5px;top:440.5px">BY COUNTRY</div>
<div class="t ttl" id="t4" style="left:737px;top:419px;letter-spacing:0.3px">Profit</div>
<div class="t sub" id="s4" style="left:736px;top:440.5px">BY COUNTRY</div>

<!-- GROSS SALES CHART -->
<svg style="left:0;top:0" width="1396" height="863" viewBox="0 0 1396 863">
<g stroke="#c8c6c4" stroke-width="1.2" stroke-dasharray="1.2 6.2" fill="none">
<path d="M169 287 H999"/><path d="M169 341.3 H999"/>
<path d="M288.3 478.5 V768"/><path d="M387.5 478.5 V768"/><path d="M486.8 478.5 V768"/><path d="M586.2 478.5 V768"/><path d="M685.5 478.5 V768"/>
</g>
<polyline fill="none" stroke="#118dff" stroke-width="3.2" stroke-linejoin="round" stroke-linecap="round" points="181.5,315.3 235,287.6 291.3,296.3 342.5,309.2 396.3,301.3 451.3,298.8 501.3,307.6 556.3,300.5 608.8,304.3 663.8,285 717.5,293.4 772,306.4 826.3,303.3 879.3,268.8 933.8,308.8 987.5,273"/>
<g fill="#118dff">
<rect x="288" y="499.3" width="375" height="40"/>
<rect x="288" y="551" width="365" height="39.8"/>
<rect x="288" y="602.5" width="350" height="39.4"/>
<rect x="288" y="653.8" width="297" height="39.3"/>
<rect x="288" y="705" width="288.3" height="39.6"/>
</g>
</svg>
<div class="t ax" style="left:121.5px;top:279.5px" id="a10m">$10M</div>
<div class="t ax" style="left:144.8px;top:334px" id="a0">$-</div>
<div class="t ax xl" style="left:182px;top:348px">Sep 2013</div>
<div class="t ax xl" style="left:290.5px;top:348px">Nov 2013</div>
<div class="t ax xl" style="left:398px;top:348px">Jan 2014</div>
<div class="t ax xl" style="left:502px;top:348px">Mar 2014</div>
<div class="t ax xl" style="left:610px;top:348px">May 2014</div>
<div class="t ax xl" style="left:717.5px;top:348px">Jul 2014</div>
<div class="t ax xl" style="left:827px;top:348px">Sep 2014</div>
<div class="t ax xl" style="left:935px;top:348px">Nov 2014</div>
<div class="t" id="ygs" style="left:105.7px;top:300px;font-size:12.5px;font-weight:bold;color:#252423;transform:translate(-50%,-50%) rotate(-90deg);letter-spacing:-0.1px">Gross Sales</div>

<!-- SALES AVERAGE -->
<div class="t" id="big" style="left:1197.2px;top:315.5px;font-size:60px;color:#252423;transform:translate(-50%,-50%) scaleX(0.832);-webkit-text-stroke:1.65px #fff;letter-spacing:0px">$169.61K</div>

<!-- BAR CHART LABELS -->
<div class="t ax yl" style="top:512px">France</div>
<div class="t ax yl" style="top:563.5px">Germany</div>
<div class="t ax yl" style="top:615px">Canada</div>
<div class="t ax yl" style="top:666px;letter-spacing:0.02px">United States of A...</div>
<div class="t ax yl" style="top:717.5px;letter-spacing:0.25px">Mexico</div>
<div class="t ax xl" style="left:288.5px;top:773px">$-</div>
<div class="t ax xl" style="left:388px;top:773px">$1M</div>
<div class="t ax xl" style="left:487px;top:773px">$2M</div>
<div class="t ax xl" style="left:586.5px;top:773px">$3M</div>
<div class="t ax xl" style="left:686px;top:773px">$4M</div>
<div class="t" id="xprofit" style="left:486.5px;top:796.2px;font-size:16px;color:#252423;-webkit-text-stroke:0.35px #252423;transform:translateX(-50%);letter-spacing:1.05px">Profit</div>
<div class="t" id="ycountry" style="left:108.6px;top:623px;font-size:16.3px;color:#252423;-webkit-text-stroke:0.35px #252423;transform:translate(-50%,-50%) rotate(-90deg);letter-spacing:0.55px">Country</div>

</div>
<div class="abs" style="left:18px;top:861.6px;width:77px;height:1.4px;background:#2b2b2b"></div>
</body>
</html>
